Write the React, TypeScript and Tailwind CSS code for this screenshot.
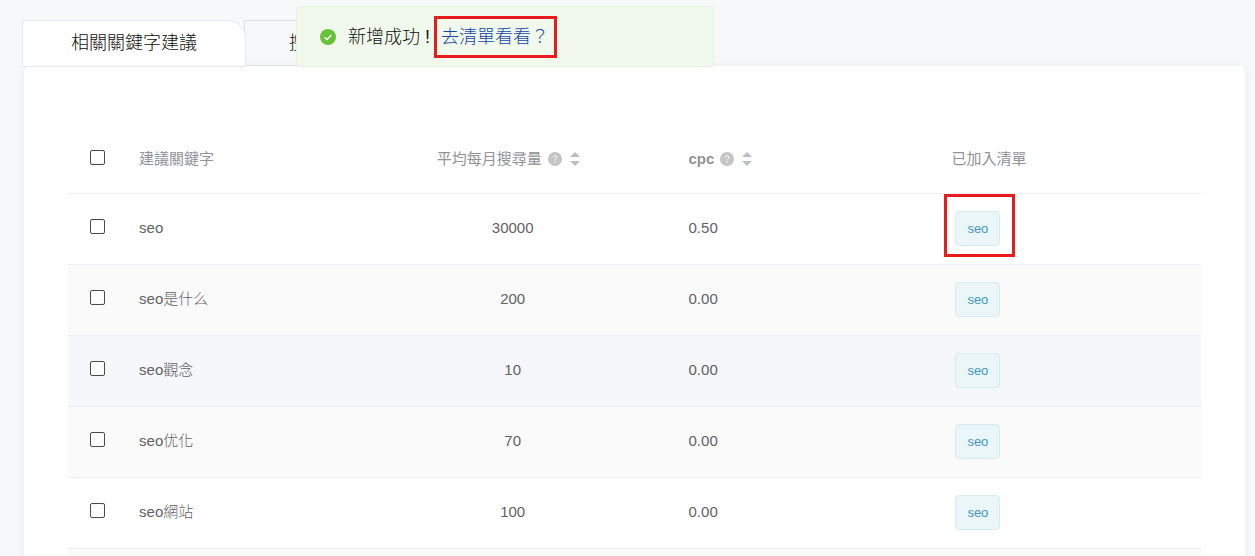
import React from "react";

type Row = { keyword: string; volume: string; cpc: string; list: string; marked?: boolean };

const rows: Row[] = [
  { keyword: "seo", volume: "30000", cpc: "0.50", list: "seo", marked: true },
  { keyword: "seo是什么", volume: "200", cpc: "0.00", list: "seo" },
  { keyword: "seo觀念", volume: "10", cpc: "0.00", list: "seo" },
  { keyword: "seo优化", volume: "70", cpc: "0.00", list: "seo" },
  { keyword: "seo網站", volume: "100", cpc: "0.00", list: "seo" },
];

const rowColors = ["bg-white", "bg-[#fafafa]", "bg-[#f5f7fa]", "bg-[#fafafa]", "bg-white"];

function Check({ label }: { label: string }) {
  return (
    <input
      type="checkbox"
      aria-label={label}
      className="block size-[15px] appearance-none rounded-[2px] border border-[#4a4a4a] bg-white checked:bg-[#409eff]"
    />
  );
}

function HelpIcon() {
  return (
    <svg viewBox="0 0 14 14" className="size-3.5 shrink-0" aria-hidden="true">
      <circle cx="7" cy="7" r="7" fill="#c4c4c4" />
      <path d="M5.2 5.6a1.8 1.8 0 1 1 2.7 1.5c-.6.4-.9.6-.9 1.3" fill="none" stroke="#fff" strokeWidth="1" />
      <circle cx="7" cy="10.2" r=".7" fill="#fff" />
    </svg>
  );
}

function SortButton({ label }: { label: string }) {
  return (
    <button type="button" aria-label={label} className="shrink-0">
      <svg viewBox="0 0 10 14" className="h-3.5 w-2.5" aria-hidden="true">
        <path d="M5 0l5 5H0z" fill="#b9bec8" />
        <path d="M5 14l5-5H0z" fill="#b9bec8" />
      </svg>
    </button>
  );
}

export default function App() {
  return (
    <div className="relative h-screen overflow-hidden bg-[#f7f8fa] pt-5 pr-2.5 pl-[22px] font-['Liberation_Sans','Noto_Sans_CJK_TC',sans-serif] text-[15px] text-[#606266]">
      <nav className="flex h-[46px] text-lg font-light text-[#111]">
        <button type="button" className="z-10 h-[47px] w-56 rounded-tr-[18px] border border-[#e6e7ef] bg-white pb-0.5">
          相關關鍵字建議
        </button>
        <button type="button" className="-ml-0.5 w-56 border border-[#dcdfe6] pl-11 text-left">
          搜尋
        </button>
      </nav>

      <main className="ml-0.5 h-full rounded-md bg-white px-11 pt-[60px] shadow-[0_1px_8px_rgba(0,0,0,0.06)]">
        <table className="w-full table-fixed border-collapse text-left">
          <colgroup>
            <col className="w-[5.3%]" />
            <col className="w-[19.4%]" />
            <col className="w-[29.1%]" />
            <col className="w-[23.2%]" />
            <col className="w-[23%]" />
          </colgroup>
          <thead className="text-[#909399]">
            <tr className="h-[67px] border-b border-[#ebeef5]">
              <th className="pb-1 pl-[22px]">
                <Check label="全選" />
              </th>
              <th className="px-[11px] font-normal">建議關鍵字</th>
              <th className="pr-5 pl-[11px] font-normal">
                <div className="flex items-center justify-center">
                  平均每月搜尋量
                  <span className="mr-2 ml-1.5">
                    <HelpIcon />
                  </span>
                  <SortButton label="依搜尋量排序" />
                </div>
              </th>
              <th className="px-[11px]">
                <div className="flex items-center">
                  cpc
                  <span className="mr-2 ml-1.5">
                    <HelpIcon />
                  </span>
                  <SortButton label="依 cpc 排序" />
                </div>
              </th>
              <th className="px-[11px] font-normal">已加入清單</th>
            </tr>
          </thead>
          <tbody>
            {rows.map((row, i) => (
              <tr key={row.keyword} className={`h-[71px] border-b border-[#ebeef5] ${rowColors[i]}`}>
                <td className="pb-1 pl-[22px]">
                  <Check label={row.keyword} />
                </td>
                <td className="px-[11px] font-light">{row.keyword}</td>
                <td className="px-[11px] text-center">{row.volume}</td>
                <td className="px-[11px]">{row.cpc}</td>
                <td className="px-[15px]">
                  <span className="relative inline-flex h-[35px] items-center rounded border border-[#d5ecf0] bg-[#ebf6f8] px-[11px] align-middle text-[13px] text-[#3f98c4]">
                    {row.list}
                    {row.marked && (
                      <span className="absolute -top-[18px] -right-4 -bottom-3 -left-3 border-3 border-[#e81c1c]" />
                    )}
                  </span>
                </td>
              </tr>
            ))}
            <tr className="h-[71px] bg-[#fafafa]">
              <td colSpan={5} />
            </tr>
          </tbody>
        </table>
      </main>

      <div
        role="status"
        className="absolute top-1.5 left-[296px] z-20 flex h-[61px] w-[418px] items-center rounded border border-[#e1f3d8] bg-[#f0f9eb] pl-[23px] text-lg font-light text-[#111]"
      >
        <svg viewBox="0 0 16 16" className="mr-3 size-4 shrink-0" aria-hidden="true">
          <circle cx="8" cy="8" r="8" fill="#67c23a" />
          <path d="M4.6 8.2l2.4 2.3 4.4-4.6" fill="none" stroke="#fff" strokeWidth="1.4" />
        </svg>
        <span className="whitespace-nowrap">新增成功 !</span>
        <a href="#list" className="relative ml-[11px] whitespace-nowrap text-[#1546a8]">
          去清單看看？
          <span className="absolute -top-[7px] -right-2 -bottom-[7px] -left-[7px] border-3 border-[#e81c1c]" />
        </a>
      </div>
    </div>
  );
}
